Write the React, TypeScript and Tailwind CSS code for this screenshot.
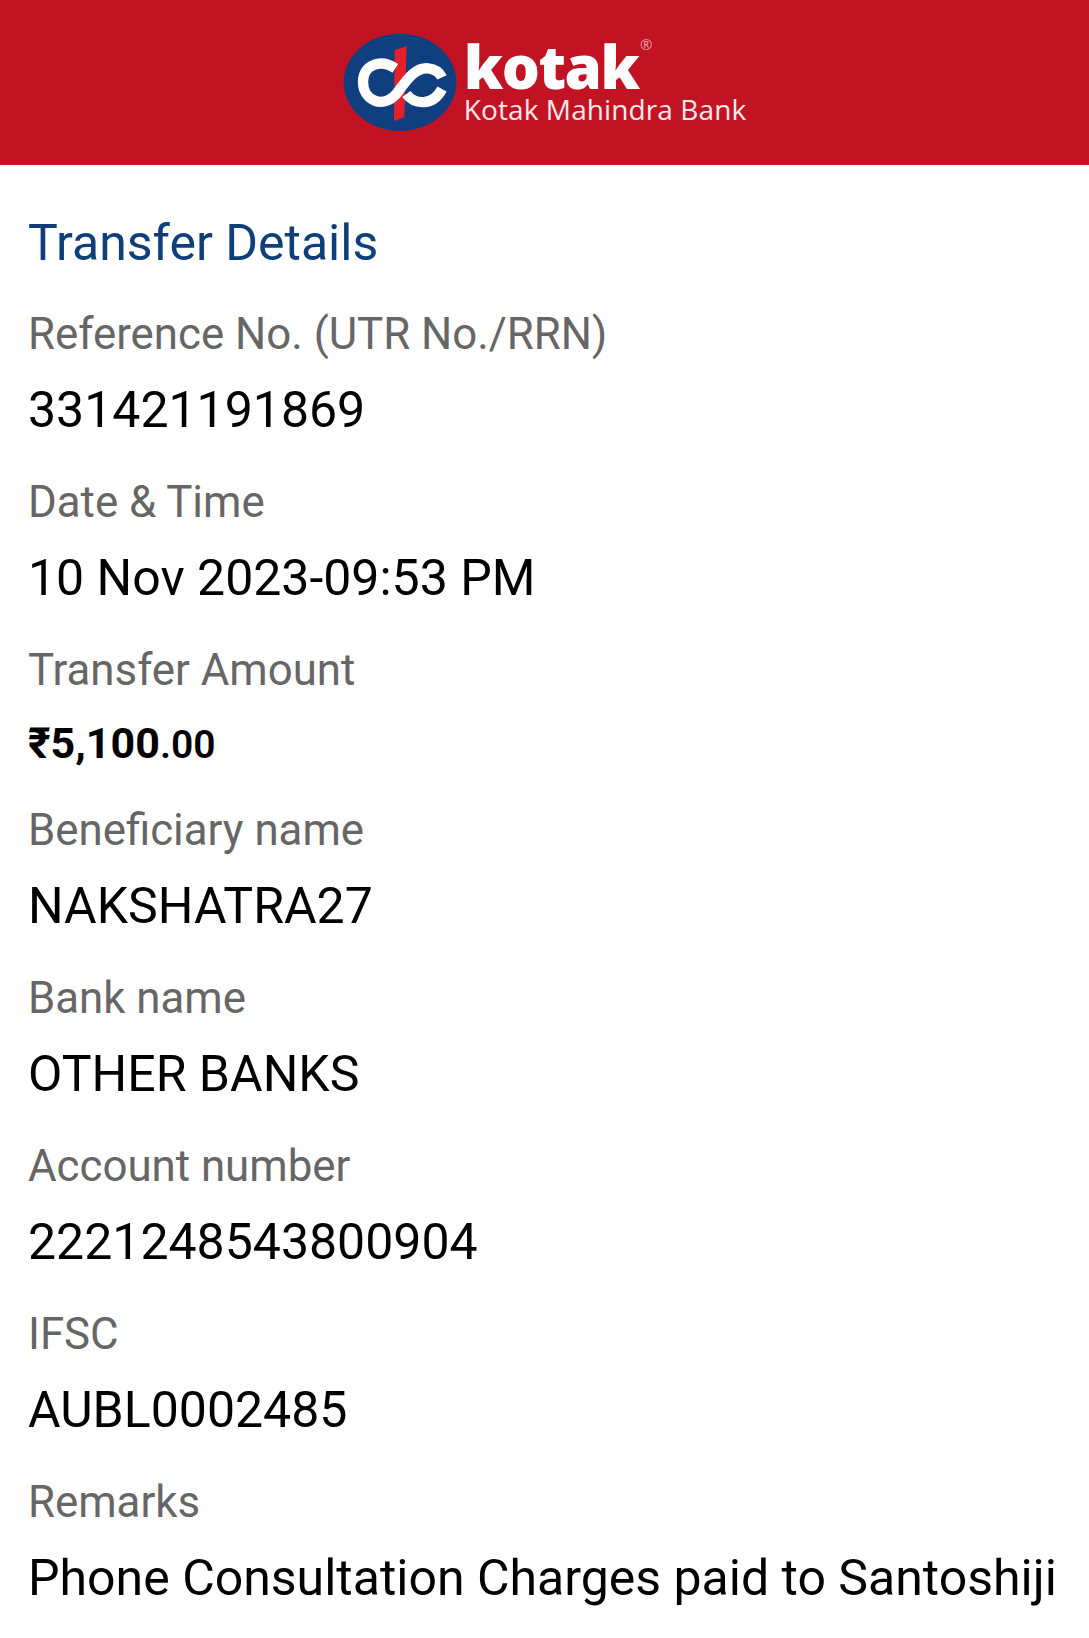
const rows = [
  { label: 'Reference No. (UTR No./RRN)', value: '331421191869' },
  { label: 'Date & Time', value: '10 Nov 2023-09:53 PM' },
  { label: 'Transfer Amount', amount: true },
  { label: 'Beneficiary name', value: 'NAKSHATRA27' },
  { label: 'Bank name', value: 'OTHER BANKS' },
  { label: 'Account number', value: '2221248543800904' },
  { label: 'IFSC', value: 'AUBL0002485' },
  { label: 'Remarks', value: 'Phone Consultation Charges paid to Santoshiji' },
]

function KotakMark() {
  return (
    <svg width="125" height="108" viewBox="0 0 375 324" className="shrink-0">
      <ellipse cx="186" cy="160" rx="169" ry="146" fill="#0f3f7f" />
      <polygon points="170,63 206,52 199,265 168,276" fill="#e4202c" />
      <path
        d="M172 118 C130 90 75 105 75 158 C75 215 135 240 175 195 C205 155 230 115 270 118 C290 120 305 130 312 145"
        stroke="#fff"
        strokeWidth="31"
        fill="none"
      />
      <path d="M205 195 C230 228 285 232 312 180" stroke="#fff" strokeWidth="31" fill="none" />
    </svg>
  )
}

export default function App() {
  return (
    <div className="w-[1089px] h-[1638px] overflow-hidden bg-white font-['Roboto',sans-serif]">
      <header className="h-[165px] bg-[#c21325] flex items-center justify-center gap-[1px] pr-[5px]">
        <KotakMark />
        <div className="flex flex-col text-white font-['Open_Sans',sans-serif]">
          <div className="relative -mt-[1px] text-[60px] leading-[53px] font-extrabold tracking-[-1.5px] w-fit">
            kotak
            <span className="absolute top-[-4px] right-[-14px] text-[15px] leading-[16px] font-normal tracking-normal text-white/60">®</span>
          </div>
          <div className="text-[28px] leading-[32px] tracking-[0.1px] text-[#fde8ea]">Kotak Mahindra Bank</div>
        </div>
      </header>
      <main className="px-[28px] pt-[50px]">
        <h1 className="text-[50px] leading-[56px] text-[#0f3f7a] mb-[33px]">Transfer Details</h1>
        <div className="flex flex-col">
          {rows.map((row) => (
            <div key={row.label} className={row.amount ? 'h-[160px]' : 'h-[168px]'}>
              <div className="text-[43.8px] leading-[60px] text-[#666666]">{row.label}</div>
              {row.amount ? (
                <div className="mt-[18px] text-[43px] leading-[50px] font-bold text-black">
                  ₹5,100<span className="text-[39px] font-semibold">.00</span>
                </div>
              ) : (
                <div className="mt-[17px] text-[50px] leading-[59px] text-black">{row.value}</div>
              )}
            </div>
          ))}
        </div>
      </main>
    </div>
  )
}
